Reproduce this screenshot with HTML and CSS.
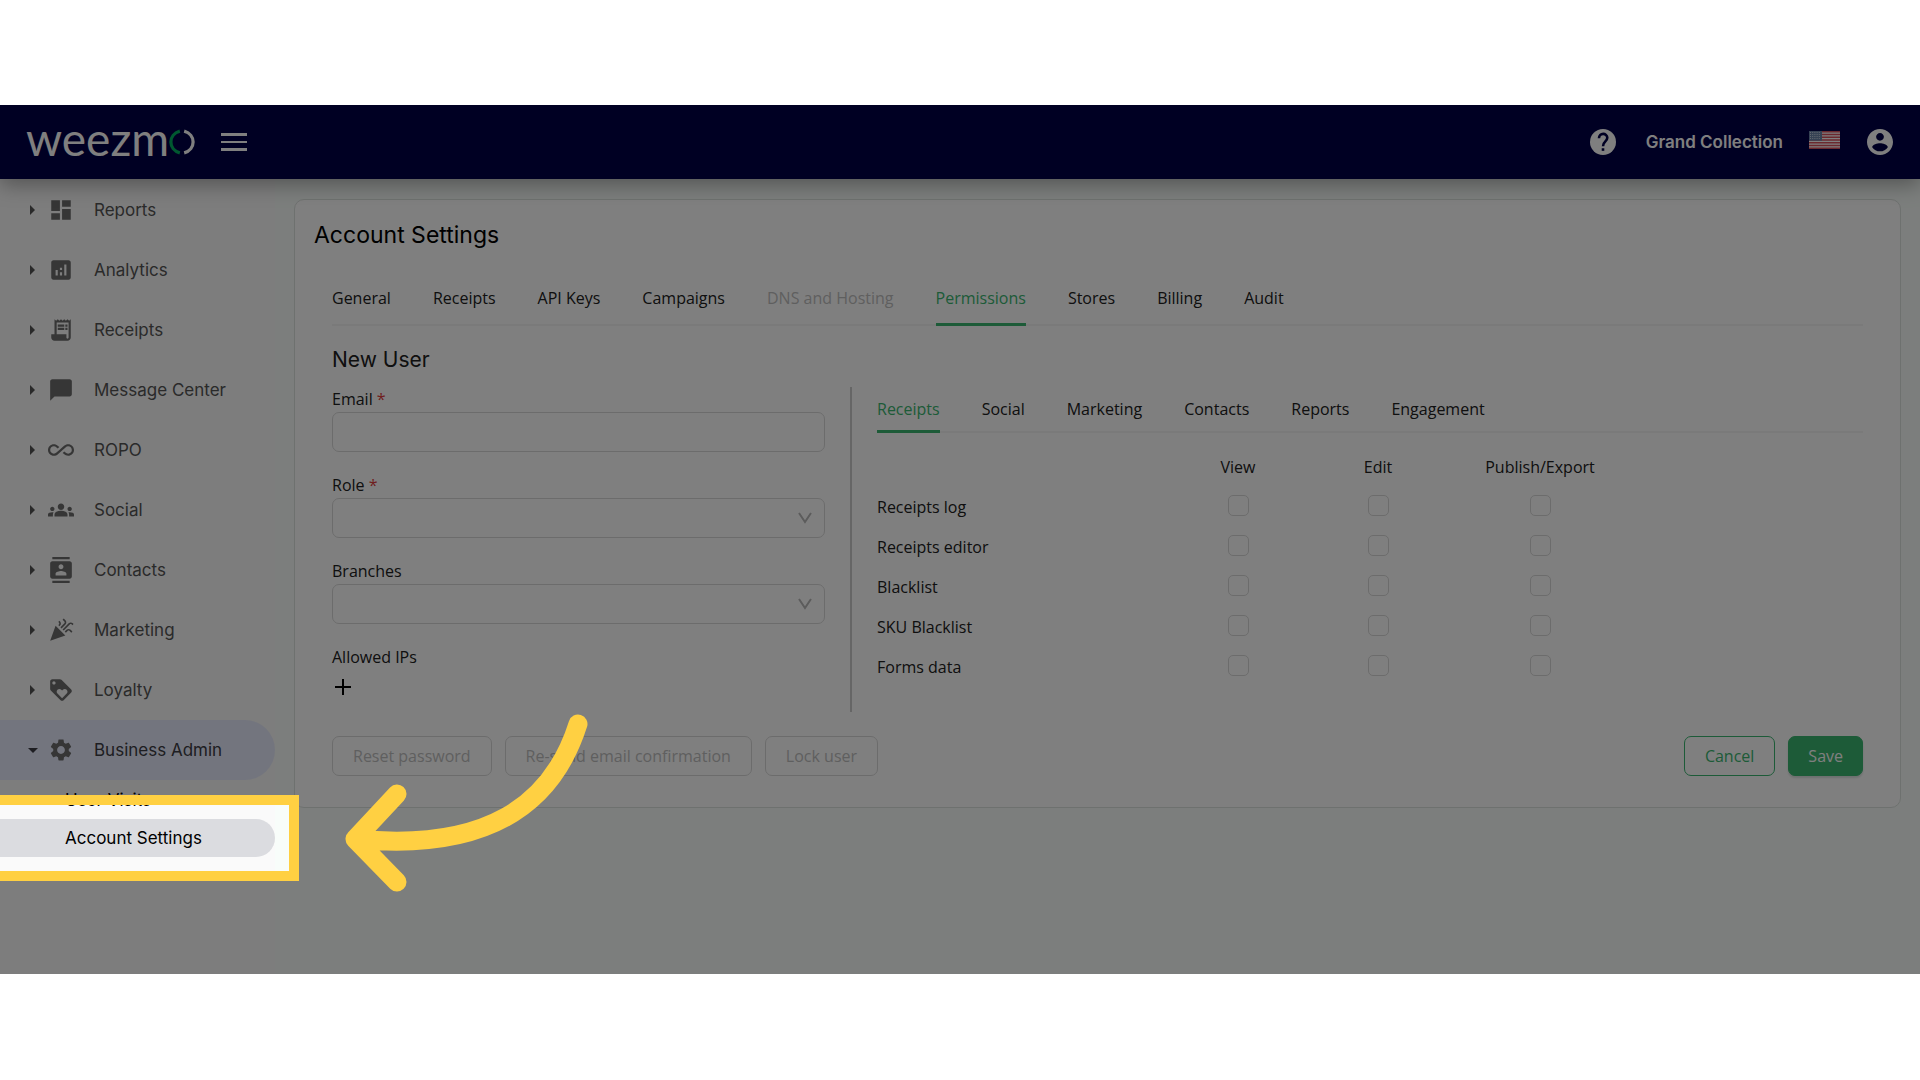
FILE: index.html
```html
<!DOCTYPE html>
<html lang="en">
<head>
<meta charset="utf-8">
<meta name="viewport" content="width=device-width, initial-scale=1">
<title>Weezmo - Account Settings</title>
<link rel="stylesheet" href="styles.css">
</head>
<body>
<div class="app">
  <header class="topbar">
    <a class="logo" href="#" aria-label="weezmo">
      <span class="logo-text">weezm</span>
      <svg class="logo-ring" viewBox="0 0 24 24" aria-hidden="true">
        <path class="ring-green" d="M10 2C-1 5-1 19 10 22"/>
        <path class="ring-white" d="M14 2C25 5 25 19 14 22"/>
      </svg>
    </a>
    <button class="icon-button burger" type="button" aria-label="Toggle menu">
      <svg viewBox="0 0 26 20" aria-hidden="true"><path d="M0 1h26v3H0zM0 9h26v2H0zM0 16h26v3H0z"/></svg>
    </button>
    <div class="topbar-right">
      <button class="icon-button" type="button" aria-label="Help">
        <svg class="icon-large" viewBox="2 2 20 20" aria-hidden="true"><circle cx="12" cy="12" r="10"/><path class="cut-line" d="M8.9 9.2C8.9 4.6 15.3 4.800 15.300 8.800C15.300 11.600 12 11.500 12 15.200"/><path class="cut" d="M11 16.800h2v2h-2z"/></svg>
      </button>
      <span class="account-name">Grand Collection</span>
      <button class="icon-button" type="button" aria-label="Language">
        <svg class="flag" viewBox="0 0 31 18" aria-hidden="true">
          <path fill="#fff" d="M0 0h31v18H0z"/>
          <path stroke="#d8505c" stroke-width="1.400" d="M0 .7h31M0 3.460h31M0 6.230h31M0 9h31M0 11.770h31M0 14.540h31M0 17.300h31"/>
          <path fill="#6d84a8" d="M0 0h13v9.700H0z"/>
          <path stroke="#c6d0e0" stroke-dasharray="1 1.200" d="M1 1.500h11M1 3.500h11M1 5.500h11M1 7.500h11"/>
        </svg>
      </button>
      <button class="icon-button" type="button" aria-label="Profile">
        <svg class="icon-large" viewBox="2 2 20 20" aria-hidden="true"><path d="M12 2C6.480 2 2 6.480 2 12s4.480 10 10 10 10-4.480 10-10S17.520 2 12 2zm0 3c1.660 0 3 1.340 3 3s-1.340 3-3 3-3-1.340-3-3 1.340-3 3-3zm0 14.200c-2.500 0-4.710-1.280-6-3.220.03-1.990 4-3.080 6-3.080 1.990 0 5.970 1.090 6 3.080-1.290 1.940-3.500 3.220-6 3.220z"/></svg>
      </button>
    </div>
  </header>

  <div class="body">
    <nav class="sidebar" aria-label="Main">
      <ul class="menu">
        <li><a class="menu-item" href="#"><svg class="caret" viewBox="0 0 10 10"><path d="M2 0l5 5-5 5z"/></svg><svg class="icon" viewBox="0 0 24 24"><path d="M3 13h8V3H3v10zm0 8h8v-6H3v6zm10 0h8V11h-8v10zm0-18v6h8V3h-8z"/></svg><span>Reports</span></a></li>
        <li><a class="menu-item" href="#"><svg class="caret" viewBox="0 0 10 10"><path d="M2 0l5 5-5 5z"/></svg><svg class="icon" viewBox="0 0 24 24"><path d="M19 3H5c-1.100 0-2 .9-2 2v14c0 1.100.9 2 2 2h14c1.100 0 2-.9 2-2V5c0-1.100-.9-2-2-2zM9 17H7v-5h2v5zm4 0h-2v-3h2v3zm0-5h-2v-2h2v2zm4 5h-2V7h2v10z"/></svg><span>Analytics</span></a></li>
        <li><a class="menu-item" href="#"><svg class="caret" viewBox="0 0 10 10"><path d="M2 0l5 5-5 5z"/></svg><svg class="icon" viewBox="0 0 24 24"><path d="M19.500 3.500L18 2l-1.500 1.500L15 2l-1.500 1.500L12 2l-1.500 1.500L9 2 7.500 3.500 6 2v14H3v3c0 1.660 1.340 3 3 3h12c1.660 0 3-1.340 3-3V2l-1.500 1.500zM19 19c0 .55-.45 1-1 1s-1-.45-1-1v-3H8V5h11v14zM9 7h6v2H9zM16 7h2v2h-2zM9 10h6v2H9zM16 10h2v2h-2z"/></svg><span>Receipts</span></a></li>
        <li><a class="menu-item" href="#"><svg class="caret" viewBox="0 0 10 10"><path d="M2 0l5 5-5 5z"/></svg><svg class="icon" viewBox="0 0 24 24"><path d="M20 2H4c-1.100 0-2 .9-2 2v18l4-4h14c1.100 0 2-.9 2-2V4c0-1.100-.9-2-2-2z"/></svg><span>Message Center</span></a></li>
        <li><a class="menu-item" href="#"><svg class="caret" viewBox="0 0 10 10"><path d="M2 0l5 5-5 5z"/></svg><svg class="icon" viewBox="0 0 24 24"><path d="M18.600 6.620c-1.440 0-2.800.56-3.770 1.530L12 10.660 10.480 12h.01L7.800 14.390c-.64.64-1.490.99-2.400.99-1.870 0-3.390-1.510-3.390-3.380S3.530 8.620 5.400 8.620c.91 0 1.760.35 2.440 1.030l1.130 1 1.510-1.340L9.220 8.200C8.200 7.180 6.840 6.620 5.400 6.620 2.420 6.620 0 9.040 0 12s2.420 5.380 5.400 5.380c1.440 0 2.800-.56 3.770-1.530l2.830-2.500.01.01L13.520 12h-.01l2.690-2.390c.64-.64 1.490-.99 2.400-.99 1.870 0 3.390 1.510 3.390 3.380s-1.520 3.380-3.390 3.380c-.9 0-1.760-.35-2.440-1.030l-1.140-1.010-1.510 1.340 1.270 1.120c1.020 1.010 2.370 1.570 3.820 1.570 2.980 0 5.400-2.410 5.400-5.380s-2.420-5.370-5.400-5.370z"/></svg><span>ROPO</span></a></li>
        <li><a class="menu-item" href="#"><svg class="caret" viewBox="0 0 10 10"><path d="M2 0l5 5-5 5z"/></svg><svg class="icon" viewBox="0 0 24 24"><path d="M12 12.750c1.630 0 3.070.39 4.240.9 1.080.48 1.760 1.560 1.760 2.730V18H6v-1.610c0-1.180.68-2.260 1.760-2.730 1.170-.52 2.610-.91 4.240-.91zM4 13c1.100 0 2-.9 2-2s-.9-2-2-2-2 .9-2 2 .9 2 2 2zm1.130 1.100c-.37-.06-.74-.1-1.130-.1-.99 0-1.930.21-2.780.58C.48 14.900 0 15.620 0 16.430V18h4.500v-1.610c0-.83.23-1.610.63-2.290zM20 13c1.100 0 2-.9 2-2s-.9-2-2-2-2 .9-2 2 .9 2 2 2zm4 3.430c0-.81-.48-1.530-1.220-1.850-.85-.37-1.790-.58-2.780-.58-.39 0-.76.04-1.130.1.400.68.63 1.460.63 2.290V18H24v-1.570zM12 6c1.660 0 3 1.340 3 3s-1.340 3-3 3-3-1.340-3-3 1.340-3 3-3z"/></svg><span>Social</span></a></li>
        <li><a class="menu-item" href="#"><svg class="caret" viewBox="0 0 10 10"><path d="M2 0l5 5-5 5z"/></svg><svg class="icon" viewBox="0 0 24 24"><path d="M20 0H4v2h16V0zM4 24h16v-2H4v2zM20 4H4c-1.100 0-2 .9-2 2v12c0 1.100.9 2 2 2h16c1.100 0 2-.9 2-2V6c0-1.100-.9-2-2-2zm-8 2.750c1.240 0 2.250 1.010 2.250 2.250s-1.010 2.250-2.250 2.250S9.750 10.240 9.750 9 10.760 6.750 12 6.750zM17 17H7v-1.500c0-1.670 3.330-2.500 5-2.500s5 .83 5 2.500V17z"/></svg><span>Contacts</span></a></li>
        <li><a class="menu-item" href="#"><svg class="caret" viewBox="0 0 10 10"><path d="M2 0l5 5-5 5z"/></svg><svg class="icon" viewBox="0 0 24 24"><path d="M2 22l14-5-9-9zM14.530 12.530l5.590-5.590c.49-.49 1.280-.49 1.770 0l.59.59 1.060-1.060-.59-.59c-1.070-1.070-2.820-1.070-3.890 0l-5.590 5.590 1.060 1.060zM10.060 6.880l-.59.59 1.060 1.060.59-.59c1.070-1.070 1.070-2.820 0-3.890l-.59-.59-1.060 1.070.59.59c.48.48.48 1.280 0 1.760zM17.060 11.880l-1.590 1.590 1.060 1.060 1.590-1.590c.49-.49 1.280-.49 1.770 0l1.610 1.610 1.060-1.060-1.610-1.610c-1.080-1.070-2.820-1.070-3.890 0zM15.060 5.880l-3.590 3.590 1.060 1.060 3.590-3.590c1.070-1.070 1.070-2.820 0-3.890l-1.590-1.590-1.060 1.060 1.590 1.590c.48.49.48 1.290 0 1.770z"/></svg><span>Marketing</span></a></li>
        <li><a class="menu-item" href="#"><svg class="caret" viewBox="0 0 10 10"><path d="M2 0l5 5-5 5z"/></svg><svg class="icon" viewBox="0 0 24 24"><path d="M21.410 11.580l-9-9C12.050 2.220 11.550 2 11 2H4c-1.100 0-2 .9-2 2v7c0 .55.22 1.050.59 1.420l9 9c.36.36.86.58 1.410.58.55 0 1.050-.22 1.410-.59l7-7c.37-.36.59-.86.59-1.410 0-.55-.23-1.060-.59-1.420zM5.500 7C4.670 7 4 6.330 4 5.500S4.670 4 5.500 4 7 4.670 7 5.500 6.330 7 5.500 7zm11.770 8.270L13 19.540l-4.270-4.270C8.280 14.810 8 14.190 8 13.500c0-1.380 1.120-2.500 2.500-2.500.69 0 1.320.28 1.770.74l.73.72.73-.73c.45-.45 1.080-.73 1.770-.73 1.380 0 2.500 1.120 2.500 2.500 0 .69-.28 1.320-.73 1.770z"/></svg><span>Loyalty</span></a></li>
        <li>
          <a class="menu-item menu-item-open" href="#" aria-expanded="true"><svg class="caret" viewBox="0 0 10 10"><path d="M0 3h10L5 8z"/></svg><svg class="icon" viewBox="0 0 24 24"><path d="M19.140 12.940c.04-.3.060-.61.060-.94 0-.32-.02-.64-.07-.94l2.030-1.580c.18-.14.230-.41.120-.61l-1.920-3.320c-.12-.22-.37-.29-.59-.22l-2.390.96c-.5-.38-1.030-.7-1.620-.94l-.36-2.540c-.04-.24-.24-.41-.48-.41h-3.840c-.24 0-.43.17-.47.410l-.36 2.540c-.59.240-1.130.570-1.620.940l-2.390-.96c-.22-.08-.47 0-.59.220L2.740 8.870c-.12.210-.08.470.120.610l2.030 1.580c-.05.300-.09.630-.09.940s.02.640.07.940l-2.030 1.580c-.18.140-.23.410-.12.610l1.920 3.320c.12.220.37.290.59.220l2.390-.96c.5.380 1.030.7 1.620.940l.36 2.540c.05.240.24.410.48.410h3.840c.24 0 .44-.17.470-.41l.36-2.540c.59-.24 1.130-.56 1.620-.94l2.390.96c.22.080.47 0 .59-.22l1.920-3.320c.12-.22.070-.47-.12-.61l-2.010-1.580zM12 15.600c-1.980 0-3.600-1.620-3.600-3.600s1.620-3.600 3.600-3.600 3.600 1.620 3.600 3.600-1.620 3.600-3.600 3.600z"/></svg><span>Business Admin</span></a>
          <ul class="submenu">
            <li><a class="submenu-item" href="#">User Visits</a></li>
            <li class="spotlight">
              <a class="submenu-item submenu-item-current" href="#" aria-current="page">Account Settings</a>
              <svg class="pointer" viewBox="0 0 260 190" aria-hidden="true"><path d="M238 15C212 97 146 143 15 130M57 85L15 130L57 173"/></svg>
            </li>
          </ul>
        </li>
      </ul>
    </nav>

    <main class="main">
      <section class="card">
        <h1 class="title">Account Settings</h1>
        <div class="content">
          <div class="tabs tabs-main" role="tablist" aria-label="Settings">
            <button class="tab" type="button" role="tab">General</button>
            <button class="tab" type="button" role="tab">Receipts</button>
            <button class="tab" type="button" role="tab">API Keys</button>
            <button class="tab" type="button" role="tab">Campaigns</button>
            <button class="tab" type="button" role="tab" disabled>DNS and Hosting</button>
            <button class="tab tab-active" type="button" role="tab" aria-selected="true">Permissions</button>
            <button class="tab" type="button" role="tab">Stores</button>
            <button class="tab" type="button" role="tab">Billing</button>
            <button class="tab" type="button" role="tab">Audit</button>
          </div>
          <h2 class="subtitle">New User</h2>
          <form class="form">
            <div class="columns">
              <div class="fields">
                <div class="field">
                  <label for="email">Email <span class="required">*</span></label>
                  <input class="control" id="email" type="email">
                </div>
                <div class="field">
                  <label for="role">Role <span class="required">*</span></label>
                  <div class="select">
                    <select class="control" id="role"><option></option></select>
                    <svg class="chevron" viewBox="0 0 14 14" aria-hidden="true"><path d="M1 2l6 9 6-9"/></svg>
                  </div>
                </div>
                <div class="field">
                  <label for="branches">Branches</label>
                  <div class="select">
                    <select class="control" id="branches"><option></option></select>
                    <svg class="chevron" viewBox="0 0 14 14" aria-hidden="true"><path d="M1 2l6 9 6-9"/></svg>
                  </div>
                </div>
                <div class="field">
                  <span class="field-name">Allowed IPs</span>
                  <button class="add" type="button" aria-label="Add allowed IP"><svg viewBox="0 0 16 16" aria-hidden="true"><path d="M8 0v16M0 8h16"/></svg></button>
                </div>
              </div>
              <div class="permissions">
                <div class="tabs tabs-sub" role="tablist" aria-label="Permission groups">
                  <button class="tab tab-active" type="button" role="tab" aria-selected="true">Receipts</button>
                  <button class="tab" type="button" role="tab">Social</button>
                  <button class="tab" type="button" role="tab">Marketing</button>
                  <button class="tab" type="button" role="tab">Contacts</button>
                  <button class="tab" type="button" role="tab">Reports</button>
                  <button class="tab" type="button" role="tab">Engagement</button>
                </div>
                <table class="grid">
                  <thead>
                    <tr><td class="col-name"></td><th class="col-check" scope="col">View</th><th class="col-check" scope="col">Edit</th><th class="col-wide" scope="col">Publish/Export</th></tr>
                  </thead>
                  <tbody>
                    <tr><th scope="row">Receipts log</th><td><input type="checkbox" aria-label="Receipts log: view"></td><td><input type="checkbox" aria-label="Receipts log: edit"></td><td><input type="checkbox" aria-label="Receipts log: publish or export"></td></tr>
                    <tr><th scope="row">Receipts editor</th><td><input type="checkbox" aria-label="Receipts editor: view"></td><td><input type="checkbox" aria-label="Receipts editor: edit"></td><td><input type="checkbox" aria-label="Receipts editor: publish or export"></td></tr>
                    <tr><th scope="row">Blacklist</th><td><input type="checkbox" aria-label="Blacklist: view"></td><td><input type="checkbox" aria-label="Blacklist: edit"></td><td><input type="checkbox" aria-label="Blacklist: publish or export"></td></tr>
                    <tr><th scope="row">SKU Blacklist</th><td><input type="checkbox" aria-label="SKU Blacklist: view"></td><td><input type="checkbox" aria-label="SKU Blacklist: edit"></td><td><input type="checkbox" aria-label="SKU Blacklist: publish or export"></td></tr>
                    <tr><th scope="row">Forms data</th><td><input type="checkbox" aria-label="Forms data: view"></td><td><input type="checkbox" aria-label="Forms data: edit"></td><td><input type="checkbox" aria-label="Forms data: publish or export"></td></tr>
                  </tbody>
                </table>
              </div>
            </div>
            <div class="actions">
              <button class="button" type="button" disabled>Reset password</button>
              <button class="button" type="button" disabled>Re-send email confirmation</button>
              <button class="button" type="button" disabled>Lock user</button>
              <span class="spacer"></span>
              <button class="button button-outline" type="button">Cancel</button>
              <button class="button button-primary" type="submit">Save</button>
            </div>
          </form>
        </div>
      </section>
    </main>
  </div>
</div>
</body>
</html>
```
FILE: styles.css
```css
:root {
  --green: #3bb671;
  --line: #d9d9d9;
  --highlight: #ffd042;
  --brand-font: Inter, "Open Sans", sans-serif;
  --text-font: "Open Sans", "Noto Sans", sans-serif;
}

*,
*::before,
*::after {
  box-sizing: border-box;
}

body {
  margin: 0;
  background: #fff;
  color: #202020;
  font: 16px/24px var(--text-font);
}

button,
input,
select {
  font: inherit;
  color: inherit;
}

button {
  padding: 0;
  border: 0;
  background: none;
}

a {
  color: inherit;
  text-decoration: none;
}

ul {
  margin: 0;
  padding: 0;
  list-style: none;
}

svg {
  display: block;
  fill: currentColor;
}

.app {
  position: relative;
  display: flex;
  flex-direction: column;
  min-height: calc(100vh - 211px);
  margin: 105px 0;
  overflow: hidden;
  background: #f8fdfa;
}

/* Top bar */
.topbar {
  position: relative;
  z-index: 1;
  display: flex;
  align-items: center;
  height: 74px;
  padding: 0 27px 0 26px;
  background: #000046;
  box-shadow: 0 5px 20px rgba(0, 0, 0, 0.35);
  color: #fff;
}

.logo {
  display: flex;
  align-items: center;
}

.logo-text {
  height: 54px;
  font: 46px/48px Lato, sans-serif;
}

.logo-ring {
  width: 26px;
  height: 26px;
  fill: none;
  stroke-width: 3px;
}

.ring-green {
  stroke: #00b060;
}

.ring-white {
  stroke: #fff;
}

.burger {
  margin-left: 26px;
}

.burger svg {
  width: 26px;
  height: 20px;
}

.topbar-right {
  display: flex;
  align-items: center;
  margin-left: auto;
}

.icon-large {
  width: 26px;
  height: 26px;
}

.cut {
  fill: #000046;
}

.cut-line {
  fill: none;
  stroke: #000046;
  stroke-width: 2;
}

.account-name {
  margin: 0 26px 0 30px;
  font: 600 17px/24px var(--brand-font);
}

.flag {
  width: 31px;
  height: 18px;
  margin: 0 27px 4px 0;
}

/* Sidebar */
.body {
  display: flex;
  flex: 1;
}

.sidebar {
  flex: none;
  width: 275px;
  background: #fafafa;
  font-family: var(--brand-font);
  font-size: 17px;
}

.menu {
  padding-top: 1px;
}

.menu-item {
  display: flex;
  align-items: center;
  height: 60px;
  padding-left: 28px;
  border-radius: 0 30px 30px 0;
  color: #555;
}

.menu-item-open {
  background: #e7ebfc;
  color: #3c3c44;
}

.caret {
  width: 10px;
  height: 10px;
  margin-right: 10px;
}

.icon {
  width: 26px;
  height: 26px;
  margin-right: 20px;
  color: #6c6c6c;
}

.submenu {
  padding-top: 1px;
}

.submenu-item {
  display: flex;
  align-items: center;
  height: 38px;
  padding-left: 65px;
  border-radius: 0 19px 19px 0;
  color: #000;
}

.submenu-item-current {
  background: #dbdce0;
}

/* Guided tour: everything around the current item is dimmed */
.spotlight {
  position: relative;
}

.spotlight::after {
  content: "";
  position: absolute;
  z-index: 2;
  inset: -24px;
  border: 10px solid var(--highlight);
  box-shadow: 0 0 0 4000px rgba(0, 0, 0, 0.5);
  pointer-events: none;
}

.pointer {
  position: absolute;
  z-index: 3;
  top: -110px;
  left: 340px;
  width: 260px;
  height: 190px;
  fill: none;
  stroke: var(--highlight);
  stroke-width: 19px;
  stroke-linecap: round;
  stroke-linejoin: round;
  pointer-events: none;
}

/* Settings card */
.main {
  flex: 1;
  min-width: 0;
  padding: 20px 19px;
}

.card {
  padding: 19px;
  border: 1px solid #dde2df;
  border-radius: 10px;
  background: #fff;
}

.title {
  margin: 0;
  color: #000;
  font: 400 23px/32px var(--brand-font);
}

.content {
  padding: 21px 18px 12px;
}

.tabs {
  display: flex;
  gap: 42px;
  border-bottom: 2px solid #f4f4f4;
}

.tab {
  margin-bottom: -2px;
  border-bottom: 3px solid transparent;
}

.tabs-main .tab {
  height: 54px;
}

.tabs-sub .tab {
  height: 46px;
}

.tab:disabled {
  color: #bfbfbf;
}

.tab-active {
  border-color: var(--green);
  color: var(--green);
}

.subtitle {
  margin: 20px 0 13px;
  font: 400 21px/28px var(--brand-font);
}

.columns {
  display: flex;
  gap: 25px;
}

.fields {
  display: flex;
  flex: 0 1 493px;
  flex-direction: column;
  gap: 21px;
  padding-bottom: 9px;
}

.field {
  display: flex;
  flex-direction: column;
  gap: 1px;
}

.required {
  color: #e03c3c;
}

.control {
  display: block;
  width: 100%;
  height: 40px;
  padding: 0 12px;
  border: 1px solid var(--line);
  border-radius: 7px;
  background: #fff;
  appearance: none;
}

.select {
  position: relative;
}

.chevron {
  position: absolute;
  top: 13px;
  right: 13px;
  width: 14px;
  height: 14px;
  fill: none;
  stroke: #b8b8b8;
  stroke-width: 2px;
  pointer-events: none;
}

.add {
  align-self: flex-start;
  padding: 9px 3px 8px;
}

.add svg {
  width: 16px;
  height: 16px;
  stroke: #000;
  stroke-width: 2px;
}

.permissions {
  flex: 1;
  min-width: 0;
  padding-left: 25px;
  border-left: 2px solid #ccc;
}

.grid {
  margin-top: 14px;
  border-collapse: collapse;
  table-layout: fixed;
}

.grid th,
.grid td {
  height: 40px;
  padding: 0;
  font-weight: 400;
  text-align: center;
}

.grid tbody th {
  text-align: left;
}

.col-name {
  width: 291px;
}

.col-check {
  width: 140px;
}

.col-wide {
  width: 184px;
}

.grid input {
  display: block;
  width: 21px;
  height: 21px;
  margin: 0 auto 3px;
  border: 1px solid var(--line);
  border-radius: 5px;
  background: #fff;
  appearance: none;
}

.actions {
  display: flex;
  gap: 13px;
  margin-top: 24px;
}

.spacer {
  flex: 1;
}

.button {
  height: 40px;
  padding: 0 20px;
  border: 1px solid var(--line);
  border-radius: 7px;
}

.button:disabled {
  color: #bfbfbf;
}

.button-outline {
  border-color: var(--green);
  color: var(--green);
}

.button-primary {
  padding: 0 19px;
  border-color: var(--green);
  background: var(--green);
  box-shadow: 0 2px 2px rgba(0, 60, 40, 0.15);
  color: #fff;
}
```
